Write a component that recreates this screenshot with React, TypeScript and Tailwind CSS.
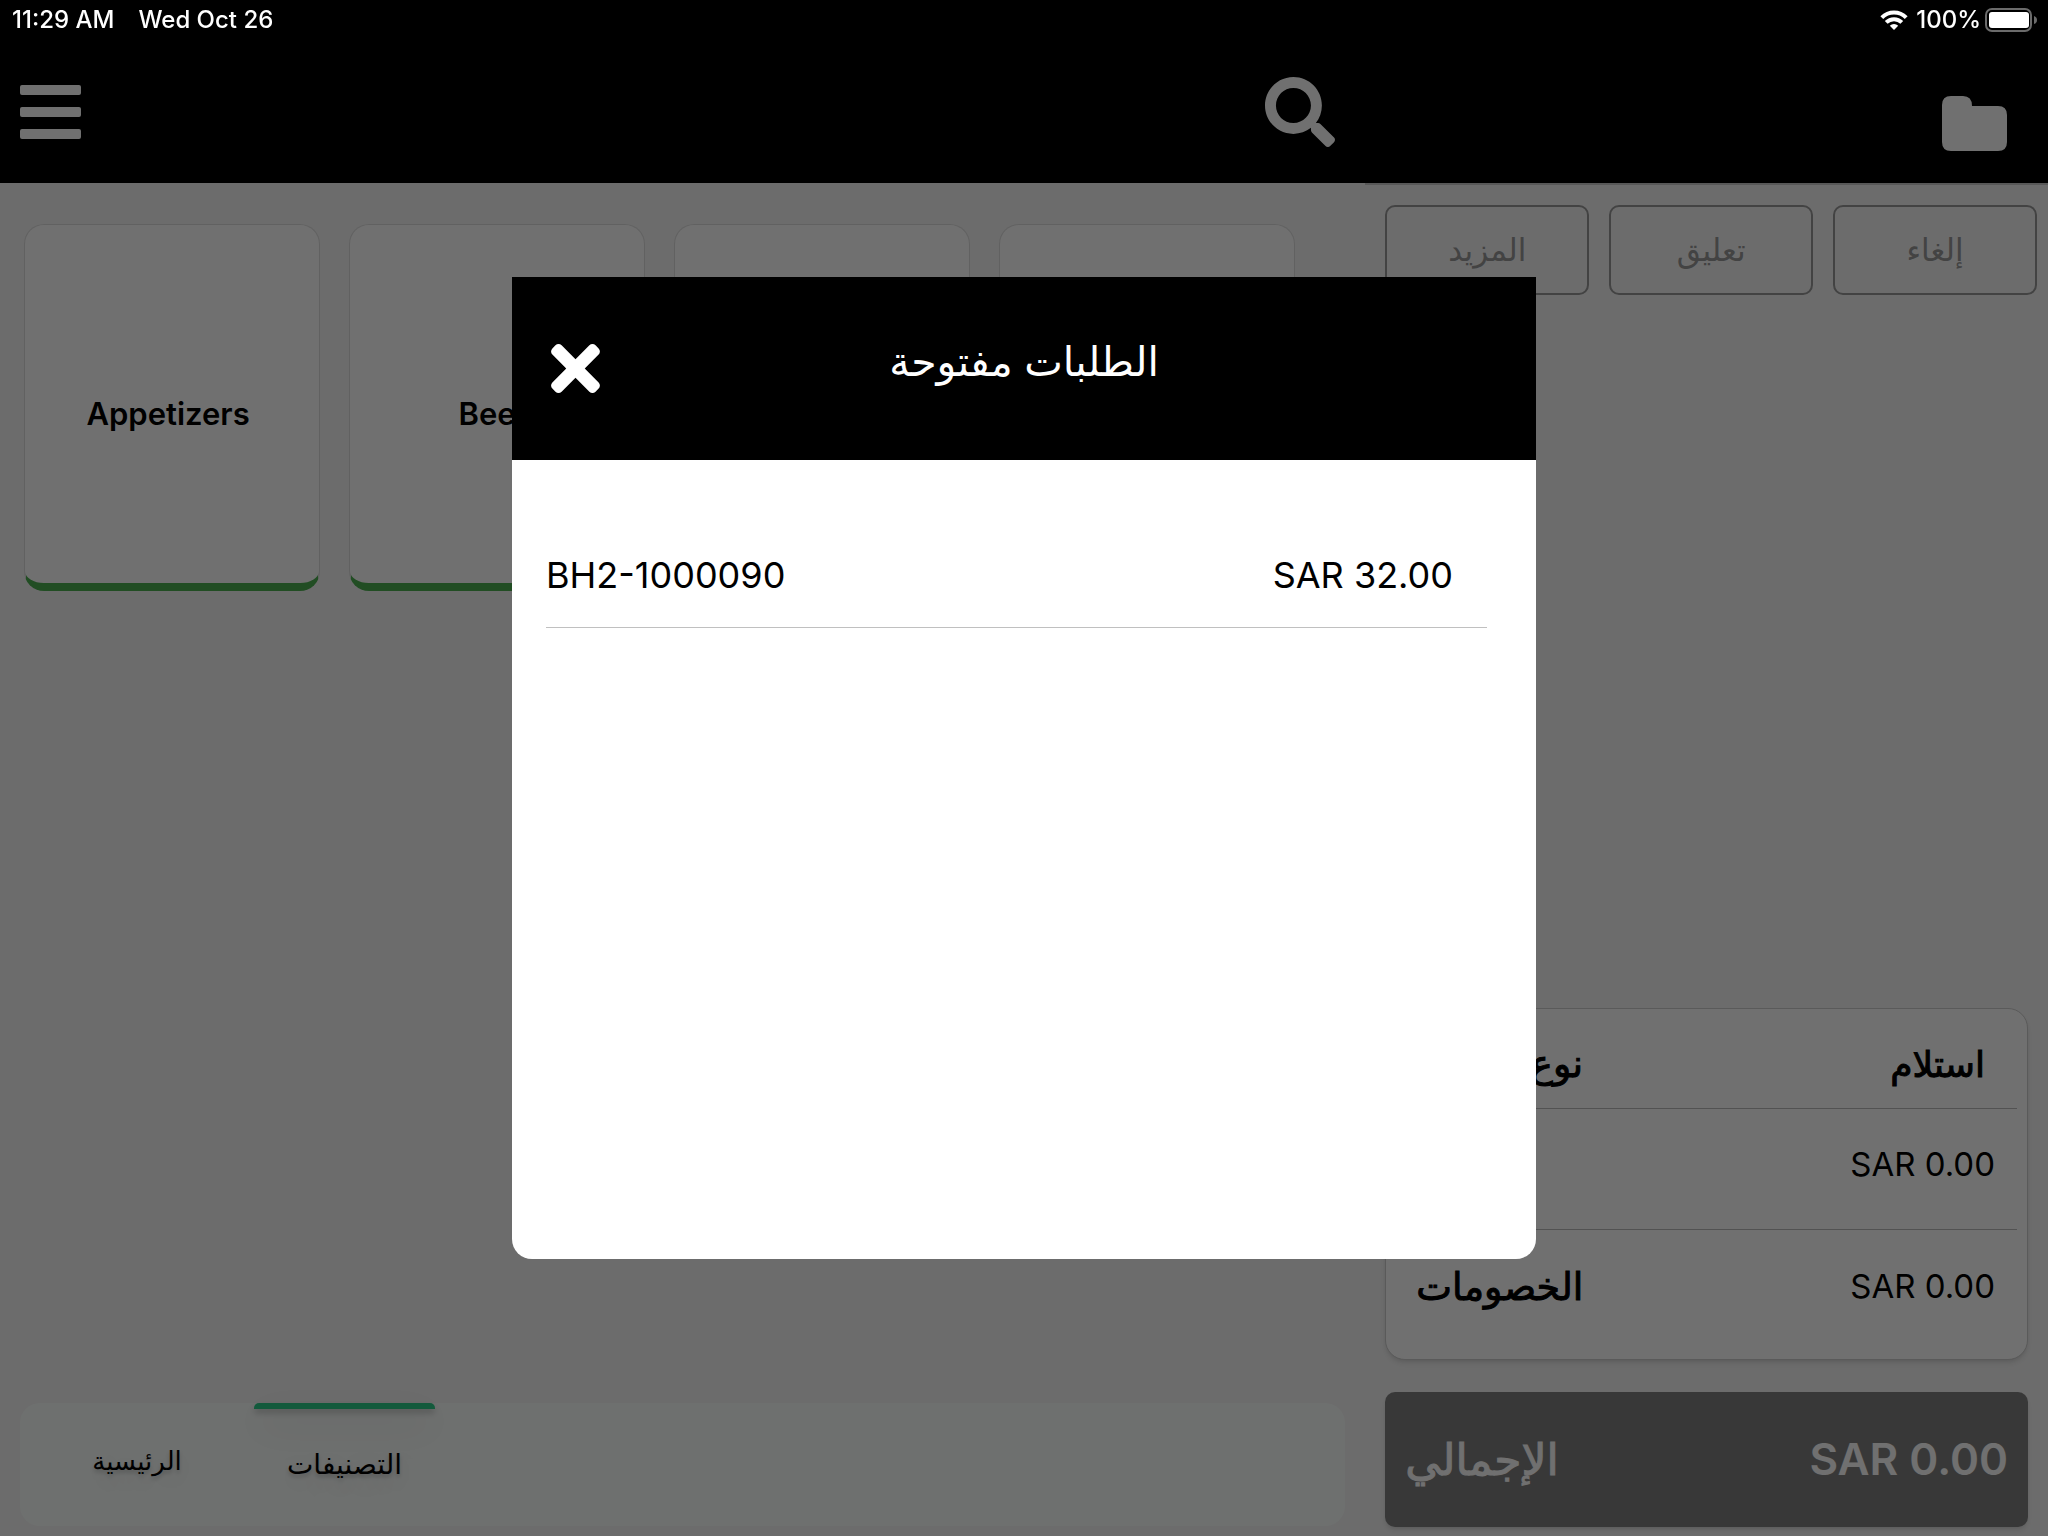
import { useState } from 'react';
import { FaSearch, FaTimes } from 'react-icons/fa';

const CATEGORIES = [
    { id: 1, name: 'Appetizers' },
    { id: 2, name: 'Beef' },
    { id: 3, name: '' },
    { id: 4, name: '' },
];

const ACTIONS = ['المزيد', 'تعليق', 'إلغاء'];

const SUMMARY = [
    { label: 'ضريبة', value: 'SAR 0.00' },
    { label: 'الخصومات', value: 'SAR 0.00' },
];

const OPEN_ORDERS = [{ id: 'BH2-1000090', total: 'SAR 32.00' }];

function MenuIcon() {
    return (
        <svg viewBox="0 0 61 54" className="w-[61px] h-[54px]" fill="currentColor">
            <rect x="0" y="0" width="61" height="10" rx="2" />
            <rect x="0" y="22" width="61" height="10" rx="2" />
            <rect x="0" y="44" width="61" height="10" rx="2" />
        </svg>
    );
}

function FolderIcon() {
    return (
        <svg viewBox="0 0 65 55" className="w-[65px] h-[55px]" fill="currentColor">
            <path d="M9 0H21Q30 0 30 10H56Q65 10 65 19V46Q65 55 56 55H9Q0 55 0 46V9Q0 0 9 0Z" />
        </svg>
    );
}

function WifiIcon() {
    return (
        <svg viewBox="0 0 28 20" className="w-7 h-5" fill="none" stroke="currentColor" strokeWidth="4">
            <path d="M1.8 7.6a17.3 17.3 0 0 1 24.4 0" />
            <path d="M6.2 12.4a11 11 0 0 1 15.6 0" />
            <path d="M14 20l-4.2-4.2a6 6 0 0 1 8.4 0z" fill="currentColor" stroke="none" />
        </svg>
    );
}

function BatteryIcon() {
    return (
        <svg viewBox="0 0 52 24" className="w-[52px] h-6">
            <rect x="1" y="1" width="45" height="22" rx="6" fill="none" stroke="#6b6b6b" strokeWidth="2" />
            <rect x="4" y="4" width="40" height="16" rx="3" fill="#fff" />
            <path d="M49 8q3 1 3 4t-3 4z" fill="#6b6b6b" />
        </svg>
    );
}

function StatusBar() {
    return (
        <div className="relative z-20 h-10 pl-3 pr-[11px] flex items-center justify-between text-white text-2xl font-medium">
            <div className="flex gap-6">
                <span>11:29 AM</span>
                <span>Wed Oct 26</span>
            </div>
            <div className="flex items-center gap-1">
                <div className="flex items-center gap-2">
                    <WifiIcon />
                    <span>100%</span>
                </div>
                <BatteryIcon />
            </div>
        </div>
    );
}

function OrdersDialog({ onClose }: { onClose: () => void }) {
    return (
        <div className="fixed inset-0 z-10 bg-black/56 flex items-center justify-center">
            <div role="dialog" aria-labelledby="orders-title" className="w-1/2 h-[982px] bg-white rounded-b-[20px] overflow-hidden">
                <div className="h-[183px] bg-black text-white grid grid-cols-[1fr_auto_1fr] items-center px-7">
                    <button onClick={onClose} aria-label="إغلاق" className="justify-self-start">
                        <FaTimes size={71} />
                    </button>
                    <h2 id="orders-title" dir="rtl" className="text-[41px] leading-[48px] pb-4">الطلبات مفتوحة</h2>
                </div>
                <ul className="pt-[60px] pl-[34px] pr-[49px]">
                    {OPEN_ORDERS.map((order) => (
                        <li key={order.id} className="h-[108px] flex items-center justify-between pt-0.5 pr-[34px] border-b border-[#c0c0c0] text-4xl">
                            <span>{order.id}</span>
                            <span>{order.total}</span>
                        </li>
                    ))}
                </ul>
            </div>
        </div>
    );
}

export default function App() {
    const [open, setOpen] = useState(true);

    return (
        <div className="min-h-screen flex flex-col bg-[#f6f6f6] text-black font-['Inter','DejaVu_Sans',sans-serif]">
            <header className="bg-black h-[183px]">
                <StatusBar />
                <div className="h-[143px] flex text-white">
                    <div className="w-2/3 flex items-start justify-between pl-5 pr-[30px] pt-[37px]">
                        <button aria-label="القائمة" className="pt-2">
                            <MenuIcon />
                        </button>
                        <button aria-label="بحث">
                            <FaSearch size={70} />
                        </button>
                    </div>
                    <div className="flex-1 flex items-start justify-end pr-[41px] pt-14">
                        <button aria-label="الملفات">
                            <FolderIcon />
                        </button>
                    </div>
                </div>
            </header>

            <div className="flex-1 flex">
                <main className="w-2/3 flex flex-col justify-between">
                    <div className="grid grid-cols-4 gap-[29px] pl-6 pr-[70px] pt-[41px]">
                        {CATEGORIES.map((category) => (
                            <button
                                key={category.id}
                                className="h-[367px] rounded-[20px] bg-white border border-b-8 border-[#dedede] border-b-[#4caf50] pt-5 pr-2 text-[31px] font-semibold"
                            >
                                {category.name}
                            </button>
                        ))}
                    </div>

                    <nav className="h-[123px] mx-5 mb-[10px] flex rounded-[20px] bg-[#fbfffd] text-[26px] text-shadow-[0_3px_4px_rgba(0,0,0,0.2),0_8px_30px_rgba(0,0,0,0.2)]">
                        <a href="#home" dir="rtl" className="w-[234px] flex items-center justify-center pb-2">
                            الرئيسية
                        </a>
                        <a href="#categories" dir="rtl" className="w-[181px] flex flex-col items-center text-[28px]">
                            <span className="w-full h-[6px] rounded-t-[5px] bg-[#2dce89] shadow-[0_4px_6px_rgba(0,0,0,0.2),0_15px_40px_rgba(0,0,0,0.2)]" />
                            <span className="flex-1 flex items-center pb-2">التصنيفات</span>
                        </a>
                    </nav>
                </main>

                <aside className="flex-1 flex flex-col justify-between border-t-2 border-[#c8c8c8] pt-5 pl-5 pb-[9px]">
                    <div className="grid grid-cols-3 gap-5 pr-[11px]">
                        {ACTIONS.map((action) => (
                            <button key={action} dir="rtl" className="h-[90px] rounded-[10px] border-2 border-[#989898] text-[#989898] text-[31px]">
                                {action}
                            </button>
                        ))}
                    </div>

                    <div className="pr-5 flex flex-col gap-8">
                        <div className="h-[352px] rounded-[20px] bg-white border border-[#cccccc] shadow-md pr-[10px] text-[38px]">
                            <div className="h-[100px] pl-[30px] pr-8 pt-2.5 flex items-center justify-between border-b border-[#bbbbbb] [-webkit-text-stroke:1px]">
                                <span dir="rtl">نوع الطلب</span>
                                <span dir="rtl" className="text-4xl">استلام</span>
                            </div>
                            {SUMMARY.map((row) => (
                                <div key={row.label} className="h-[121px] pl-[30px] pr-[22px] pb-2 flex items-center justify-between border-b border-[#bbbbbb] last:border-b-0">
                                    <span dir="rtl" className="[-webkit-text-stroke:1px]">{row.label}</span>
                                    <span className="text-[33px]">{row.value}</span>
                                </div>
                            ))}
                        </div>
                        <button className="h-[135px] rounded-[10px] bg-[#818181] text-white shadow-md px-5 pb-0.5 flex items-center justify-between text-[44px] font-semibold">
                            <span dir="rtl" className="font-medium [-webkit-text-stroke:1px]">الإجمالي</span>
                            <span>SAR 0.00</span>
                        </button>
                    </div>
                </aside>
            </div>

            {open && <OrdersDialog onClose={() => setOpen(false)} />}
        </div>
    );
}
